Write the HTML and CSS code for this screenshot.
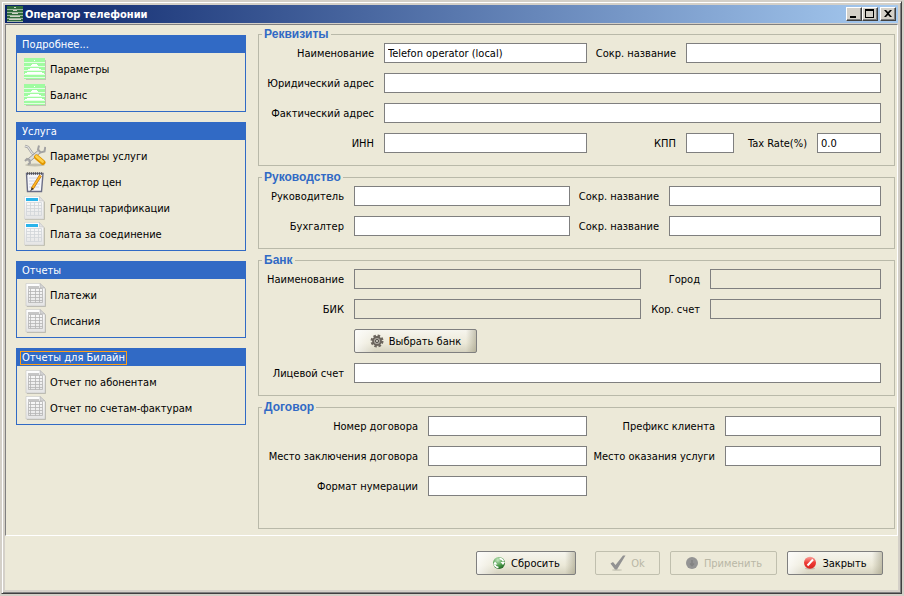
FILE: index.html
```html
<!DOCTYPE html>
<html lang="ru">
<head>
  <meta charset="UTF-8" />
  <meta name="viewport" content="width=device-width, initial-scale=1" />
  <title>Оператор телефонии</title>
  <link rel="stylesheet" href="styles.css">
</head>
<body>

  <!-- Иконки -->
  <svg class="sprite" aria-hidden="true">
    <defs>
      <linearGradient id="paper" x1="0" y1="0" x2="0" y2="1">
        <stop offset="0" stop-color="#ffffff" />
        <stop offset="1" stop-color="#e4e4e4" />
      </linearGradient>
      <radialGradient id="greenBall" cx="0.4" cy="0.25" r="0.8">
        <stop offset="0" stop-color="#c4e8c0" />
        <stop offset="0.6" stop-color="#4a9a48" />
        <stop offset="1" stop-color="#1f5f22" />
      </radialGradient>
      <linearGradient id="redBall" x1="0" y1="0" x2="0" y2="1">
        <stop offset="0" stop-color="#f9a09a" />
        <stop offset="0.5" stop-color="#ee3a34" />
        <stop offset="1" stop-color="#d8241f" />
      </linearGradient>
    </defs>
    <symbol id="i-logo" viewBox="0 0 22 22">
      <path d="M2 2h20v20H2z" fill="#c4c4b6" />
      <path d="M0 0h21v21H0z" fill="#a0fba0" />
      <path d="M0 4h21v1H0zM0 8h21v1H0zM0 12h21v1H0zM0 16h21v1H0zM0 19h21v1H0z" fill="#e4fee4" />
      <path d="M10 2h1v1h-1zM8 6h5v1h1v1H7V7h1zM6 10h9v1h2v1H4v-1h2zM3 14h15v1h2v1H1v-1h2z" fill="#fff" />
    </symbol>
    <symbol id="i-logo-small" viewBox="0 0 16 16">
      <path d="M0 0h16v16H0z" fill="#2f6b3c" />
      <path d="M0 3h16v1H0zM0 6h16v1H0zM0 9h16v1H0zM0 12h16v1H0zM0 15h16v1H0z" fill="#9fb7a0" />
      <path d="M7 1h2v1H7zM6 4h4v1H6zM5 7h6v1H5zM3 10h10v1H3zM2 13h12v1H2z" fill="#d0d4c8" />
    </symbol>
    <symbol id="i-tools" viewBox="0 0 22 24">
      <ellipse cx="11" cy="21" rx="10" ry="1.500" fill="#c2c0b0" />
      <path d="M1 2l3 1 4 6 5 4" stroke="#9a9a9a" stroke-width="2.400" fill="none" />
      <path d="M1 2l3 1 4 6 4 3" stroke="#e2e2e2" stroke-width="1.200" fill="none" />
      <path d="M4 17L16 7" stroke="#8f8f8f" stroke-width="4" />
      <path d="M4 17L16 7" stroke="#dcdcdc" stroke-width="2.400" />
      <path d="M15 1.500l-1 4 2.500 3 4-1 .8-4.500M1 17l2-2 2.500 1 .5 3-2 1.500" stroke="#a2a2a2" stroke-width="2" fill="none" />
      <path d="M12.500 13l6.500 5.500" stroke="#e09600" stroke-width="5" stroke-linecap="round" />
      <path d="M12.500 12.500l6 5" stroke="#ffd04a" stroke-width="2.800" stroke-linecap="round" />
    </symbol>
    <symbol id="i-notes" viewBox="0 0 22 24">
      <path d="M2.500 3.500h16.500l-1.500 18h-14z" fill="#f5f6fa" stroke="#6b6e86" stroke-width="1.400" />
      <path d="M5 8h11M5 11h11M5 14h11M5 17h10" stroke="#c3c9dc" stroke-width="0.800" />
      <path d="M3 3.500h15" stroke="#555" stroke-width="2.400" stroke-dasharray="1 1" />
      <path d="M16.500 5.500L8 19" stroke="#b96d00" stroke-width="3" />
      <path d="M16.500 5.500L8.500 18" stroke="#ffb526" stroke-width="1.800" />
      <path d="M8 17.500l-2 4 3.500-2.500z" fill="#333" />
    </symbol>
    <symbol id="i-table" viewBox="0 0 22 24">
      <path d="M1 23.500h19.500v-18" stroke="#c0bfb0" fill="none" />
      <path d="M.5 .5h15L19.500 5v18H.5z" fill="url(#paper)" stroke="#d2d2d2" stroke-width="0.600" />
      <path d="M15.500 .5V5h4z" fill="#e3e3e3" stroke="#bbb" stroke-width="0.500" />
      <path d="M2 2h12v3H2z" fill="#2ab4ea" />
      <path d="M2.500 6.500h15v13h-15zM2.500 9.500h15M2.500 12.500h15M2.500 15.500h15M6.500 6.500v13M10.500 6.500v13M14.500 6.500v13" fill="none" stroke="#d0d4d8" stroke-width="0.800" />
    </symbol>
    <symbol id="i-report" viewBox="0 0 22 24">
      <path d="M3 23.500h18.500v-18" stroke="#b9b8ab" fill="none" />
      <path d="M2 .5h14L21 5v18H2z" fill="url(#paper)" stroke="#c6c6c6" stroke-width="0.600" />
      <path d="M16 .5V5h5z" fill="#d4d4d4" stroke="#aaa" stroke-width="0.500" />
      <path d="M4 3h11v2H4z" fill="#c6c6c6" />
      <path d="M4.500 5.500h14v14h-14zM4.500 8.500h14M4.500 11.500h14M4.500 14.500h14M4.500 17.500h14M6.500 5.500v14M11.500 5.500v14M15.500 5.500v14" fill="none" stroke="#b4b4b4" stroke-width="0.800" />
    </symbol>
    <symbol id="i-gear" viewBox="0 0 14 14">
      <circle cx="7" cy="7" r="5.200" fill="none" stroke="#6d675f" stroke-width="2.600" stroke-dasharray="2.400 1.680" />
      <circle cx="7" cy="7" r="4" fill="#aaa69e" stroke="#6a645c" stroke-width="1.800" />
      <circle cx="7" cy="7" r="1.500" fill="#efece0" stroke="#4d4944" />
    </symbol>
    <symbol id="i-reset" viewBox="0 0 14 14">
      <circle cx="7" cy="7" r="6" fill="url(#greenBall)" />
      <path d="M2.500 8.500a4.600 4.600 0 0 0 4 3M11.500 5.500a4.600 4.600 0 0 0-4-3" stroke="#fff" stroke-width="1.600" fill="none" />
      <path d="M1 8.500l2-3 2.500 3zM13 6l-2 3-2.500-3z" fill="#fff" />
    </symbol>
    <symbol id="i-check" viewBox="0 0 16 16">
      <ellipse cx="7" cy="15" rx="5" ry="1" fill="#cfcdbd" />
      <path d="M0.500 8.500l2.500-1.500 2.500 3L13 0.500h2.500L7 14.500H5z" fill="#929292" />
    </symbol>
    <symbol id="i-apply" viewBox="0 0 14 14">
      <circle cx="7" cy="7" r="6" fill="#949494" />
      <path d="M7 4v5M5 7.500L7 9.500l2-2" stroke="#838383" stroke-width="1.600" fill="none" />
    </symbol>
    <symbol id="i-close" viewBox="0 0 14 14">
      <ellipse cx="7" cy="12.500" rx="5" ry="1" fill="#c9b9ab" />
      <circle cx="7" cy="6.800" r="6" fill="url(#redBall)" />
      <path d="M4.500 9.500L10 3.500" stroke="#fff" stroke-width="2" />
    </symbol>
  </svg>

  <div class="window">
    <header class="titlebar">
      <svg class="titlebar-icon" aria-hidden="true"><use href="#i-logo-small" /></svg>
      <h1>Оператор телефонии</h1>
      <div class="controls">
        <button type="button" class="control" aria-label="Свернуть">
          <svg viewBox="0 0 12 10"><path d="M2 7h6v2H2z" /></svg>
        </button>
        <button type="button" class="control" aria-label="Развернуть">
          <svg viewBox="0 0 12 10"><path d="M1 0h9v9H1zM2 2v6h7V2z" fill-rule="evenodd" /></svg>
        </button>
        <button type="button" class="control control-close" aria-label="Закрыть окно">
          <svg viewBox="0 0 12 10"><path d="M2 1h2l2 2 2-2h2L7 4.500 10 8H8L6 6 4 8H2l3-3.500z" /></svg>
        </button>
      </div>
    </header>

    <main class="client">
      <nav class="sidebar">
        <section class="group">
          <button type="button" class="group-title"><span>Подробнее...</span></button>
          <ul>
            <li><a href="#"><svg><use href="#i-logo" /></svg><span>Параметры</span></a></li>
            <li><a href="#"><svg><use href="#i-logo" /></svg><span>Баланс</span></a></li>
          </ul>
        </section>
        <section class="group">
          <button type="button" class="group-title"><span>Услуга</span></button>
          <ul>
            <li><a href="#"><svg><use href="#i-tools" /></svg><span>Параметры услуги</span></a></li>
            <li><a href="#"><svg><use href="#i-notes" /></svg><span>Редактор цен</span></a></li>
            <li><a href="#"><svg><use href="#i-table" /></svg><span>Границы тарификации</span></a></li>
            <li><a href="#"><svg><use href="#i-table" /></svg><span>Плата за соединение</span></a></li>
          </ul>
        </section>
        <section class="group">
          <button type="button" class="group-title"><span>Отчеты</span></button>
          <ul>
            <li><a href="#"><svg><use href="#i-report" /></svg><span>Платежи</span></a></li>
            <li><a href="#"><svg><use href="#i-report" /></svg><span>Списания</span></a></li>
          </ul>
        </section>
        <section class="group">
          <button type="button" class="group-title focused"><span>Отчеты для Билайн</span></button>
          <ul>
            <li><a href="#"><svg><use href="#i-report" /></svg><span>Отчет по абонентам</span></a></li>
            <li><a href="#"><svg><use href="#i-report" /></svg><span>Отчет по счетам-фактурам</span></a></li>
          </ul>
        </section>
      </nav>

      <form class="details" id="operator">
        <fieldset>
          <legend>Реквизиты</legend>
          <div class="grid grid-requisites">
            <label for="name">Наименование</label>
            <input type="text" id="name" value="Telefon operator (local)" />
            <label for="short-name">Сокр. название</label>
            <input type="text" id="short-name" class="from-fourth" />
            <label for="legal-address">Юридический адрес</label>
            <input type="text" id="legal-address" class="full" />
            <label for="actual-address">Фактический адрес</label>
            <input type="text" id="actual-address" class="full" />
            <label for="inn">ИНН</label>
            <input type="text" id="inn" />
            <label for="kpp">КПП</label>
            <input type="text" id="kpp" />
            <label for="tax">Tax Rate(%)</label>
            <input type="text" id="tax" value="0.0" />
          </div>
        </fieldset>

        <fieldset>
          <legend>Руководство</legend>
          <div class="grid grid-management">
            <label for="head">Руководитель</label>
            <input type="text" id="head" />
            <label for="head-short">Сокр. название</label>
            <input type="text" id="head-short" />
            <label for="accountant">Бухгалтер</label>
            <input type="text" id="accountant" />
            <label for="accountant-short">Сокр. название</label>
            <input type="text" id="accountant-short" />
          </div>
        </fieldset>

        <fieldset>
          <legend>Банк</legend>
          <div class="grid grid-bank">
            <label for="bank">Наименование</label>
            <input type="text" id="bank" readonly />
            <label for="city">Город</label>
            <input type="text" id="city" readonly />
            <label for="bik">БИК</label>
            <input type="text" id="bik" readonly />
            <label for="corr">Кор. счет</label>
            <input type="text" id="corr" readonly />
            <button type="button" class="btn btn-bank"><svg><use href="#i-gear" /></svg><span>Выбрать банк</span></button>
            <label for="account">Лицевой счет</label>
            <input type="text" id="account" class="full" />
          </div>
        </fieldset>

        <fieldset class="last">
          <legend>Договор</legend>
          <div class="grid grid-contract">
            <label for="contract">Номер договора</label>
            <input type="text" id="contract" />
            <label for="prefix">Префикс клиента</label>
            <input type="text" id="prefix" />
            <label for="place">Место заключения договора</label>
            <input type="text" id="place" />
            <label for="service-place">Место оказания услуги</label>
            <input type="text" id="service-place" />
            <label for="format">Формат нумерации</label>
            <input type="text" id="format" />
          </div>
        </fieldset>
      </form>
    </main>

    <footer class="actions">
      <button type="reset" form="operator" class="btn btn-reset"><svg><use href="#i-reset" /></svg><span>Сбросить</span></button>
      <button type="submit" form="operator" class="btn btn-ok" disabled><svg><use href="#i-check" /></svg><span>Ok</span></button>
      <button type="button" class="btn btn-apply" disabled><svg><use href="#i-apply" /></svg><span>Применить</span></button>
      <button type="button" class="btn btn-close"><svg><use href="#i-close" /></svg><span>Закрыть</span></button>
    </footer>
  </div>

</body>
</html>
```
FILE: styles.css
```css
* {
  box-sizing: border-box;
}

body {
  margin: 0;
  padding: 1px 2px 2px 1px;
  min-height: 100vh;
  display: flex;
  background: #d4d0c8;
  color: #000;
  font-family: Tahoma, "DejaVu Sans Condensed", sans-serif;
  font-size: 11px;
  line-height: 14px;
}

button,
input {
  font: inherit;
  color: inherit;
}

.sprite {
  position: absolute;
  width: 0;
  height: 0;
}

/* Окно */
.window {
  flex: 1;
  display: flex;
  flex-direction: column;
  padding: 3px;
  border: 1px solid;
  border-color: #d4d0c8 #404040 #404040 #d4d0c8;
  box-shadow: inset 1px 1px #fff, inset -1px -1px #808080;
}

.titlebar {
  display: flex;
  align-items: center;
  gap: 2px;
  height: 18px;
  padding: 0 2px;
  margin-bottom: 1px;
  background: linear-gradient(to right, #0a246a, #a6caf0);
}

.titlebar-icon {
  width: 16px;
  height: 16px;
}

.titlebar h1 {
  margin: 0;
  padding-top: 2px;
  font-size: 11px;
  font-weight: bold;
  color: #fff;
}

.controls {
  display: flex;
  margin-left: auto;
}

.control {
  width: 16px;
  height: 14px;
  padding: 1px;
  display: flex;
  border: 1px solid;
  border-color: #fff #404040 #404040 #fff;
  background: #d4d0c8;
  box-shadow: inset -1px -1px #808080;
}

.control svg {
  width: 12px;
  height: 10px;
}

.control-close {
  margin-left: 2px;
}

.client {
  flex: 1;
  display: flex;
  gap: 12px;
  padding: 2px 2px 6px 10px;
  border: 1px solid;
  border-color: #808080 #fff #fff #808080;
  background: #ece9d8;
}

/* Боковая панель */
.sidebar {
  width: 230px;
  padding-top: 8px;
  display: flex;
  flex-direction: column;
  gap: 10px;
}

.group {
  border: 1px solid #316ac5;
  border-top: 0;
}

.group-title {
  display: flex;
  align-items: center;
  width: 100%;
  height: 18px;
  padding: 1px 3px 0;
  border: 0;
  background: #316ac5;
  color: #fff;
  text-align: left;
}

.group-title span {
  padding: 0 1px;
  border: 1px solid transparent;
  line-height: 12px;
}

.group-title.focused span {
  border-color: #ffa018;
}

.group ul {
  margin: 0;
  padding: 3px 7px;
  list-style: none;
}

.group a {
  display: flex;
  align-items: center;
  gap: 4px;
  height: 26px;
  color: #000;
  text-decoration: none;
}

.group a span,
.btn span,
.grid label {
  padding-top: 2px;
}

.group svg {
  width: 22px;
  height: 24px;
}

/* Форма */
.details {
  flex: 1;
  display: flex;
  flex-direction: column;
  gap: 4px;
}

fieldset {
  min-width: 0;
  margin: 0;
  padding: 2px 13px 12px 11px;
  border: 1px solid #b9b9a9;
}

fieldset.last {
  flex: 1;
}

legend {
  margin-left: -8px;
  padding: 0 2px;
  color: #316ac5;
  font-family: Arial, "Liberation Sans", sans-serif;
  font-size: 12px;
  font-weight: bold;
  line-height: 14px;
}

.grid {
  display: grid;
  gap: 10px;
  align-items: center;
}

.grid-requisites {
  grid-template-columns: 104px 1fr 79px 48px 63px 64px;
}

.grid-management {
  grid-template-columns: 74px 216fr 79px 212fr;
}

.grid-bank {
  grid-template-columns: 74px 287fr 49px 171fr;
}

.grid-contract {
  grid-template-columns: 148px 159fr 118px 156fr;
}

.grid label {
  justify-self: end;
  white-space: nowrap;
}

.grid input {
  width: 100%;
  min-width: 0;
  height: 20px;
  padding: 0 3px;
  border: 1px solid #7f7f7f;
  border-radius: 0;
  background: #fff;
}

.grid input:read-only {
  background: #ece9d8;
}

.grid .full {
  grid-column: 2 / -1;
}

.grid .from-fourth {
  grid-column: 4 / -1;
}

/* Кнопки */
.btn {
  height: 24px;
  padding: 0;
  display: flex;
  align-items: center;
  justify-content: center;
  gap: 5px;
  border: 1px solid #7f7f7f;
  border-radius: 2px;
  background:
    linear-gradient(to right, rgba(255, 255, 255, 0.7), rgba(255, 255, 255, 0) 20px),
    linear-gradient(to left, rgba(150, 146, 120, 0.5), rgba(150, 146, 120, 0) 10px),
    linear-gradient(#f6f5ee, #ece9d8 60%, #d6d3c0);
}

.btn svg {
  width: 14px;
  height: 14px;
}

.btn:disabled {
  border-color: #c0bfae;
  background: none;
  color: #b9b7a6;
}

.btn-bank {
  grid-column: 2 / -1;
  width: 123px;
}

.actions {
  display: flex;
  justify-content: flex-end;
  gap: 10px;
  padding: 15px;
  background: #ece9d8;
}

.btn-reset {
  width: 100px;
  margin-right: 9px;
}

.btn-ok {
  width: 65px;
}

.btn-ok svg {
  width: 16px;
  height: 16px;
}

.btn-apply {
  width: 107px;
}

.btn-close {
  width: 96px;
}
```
